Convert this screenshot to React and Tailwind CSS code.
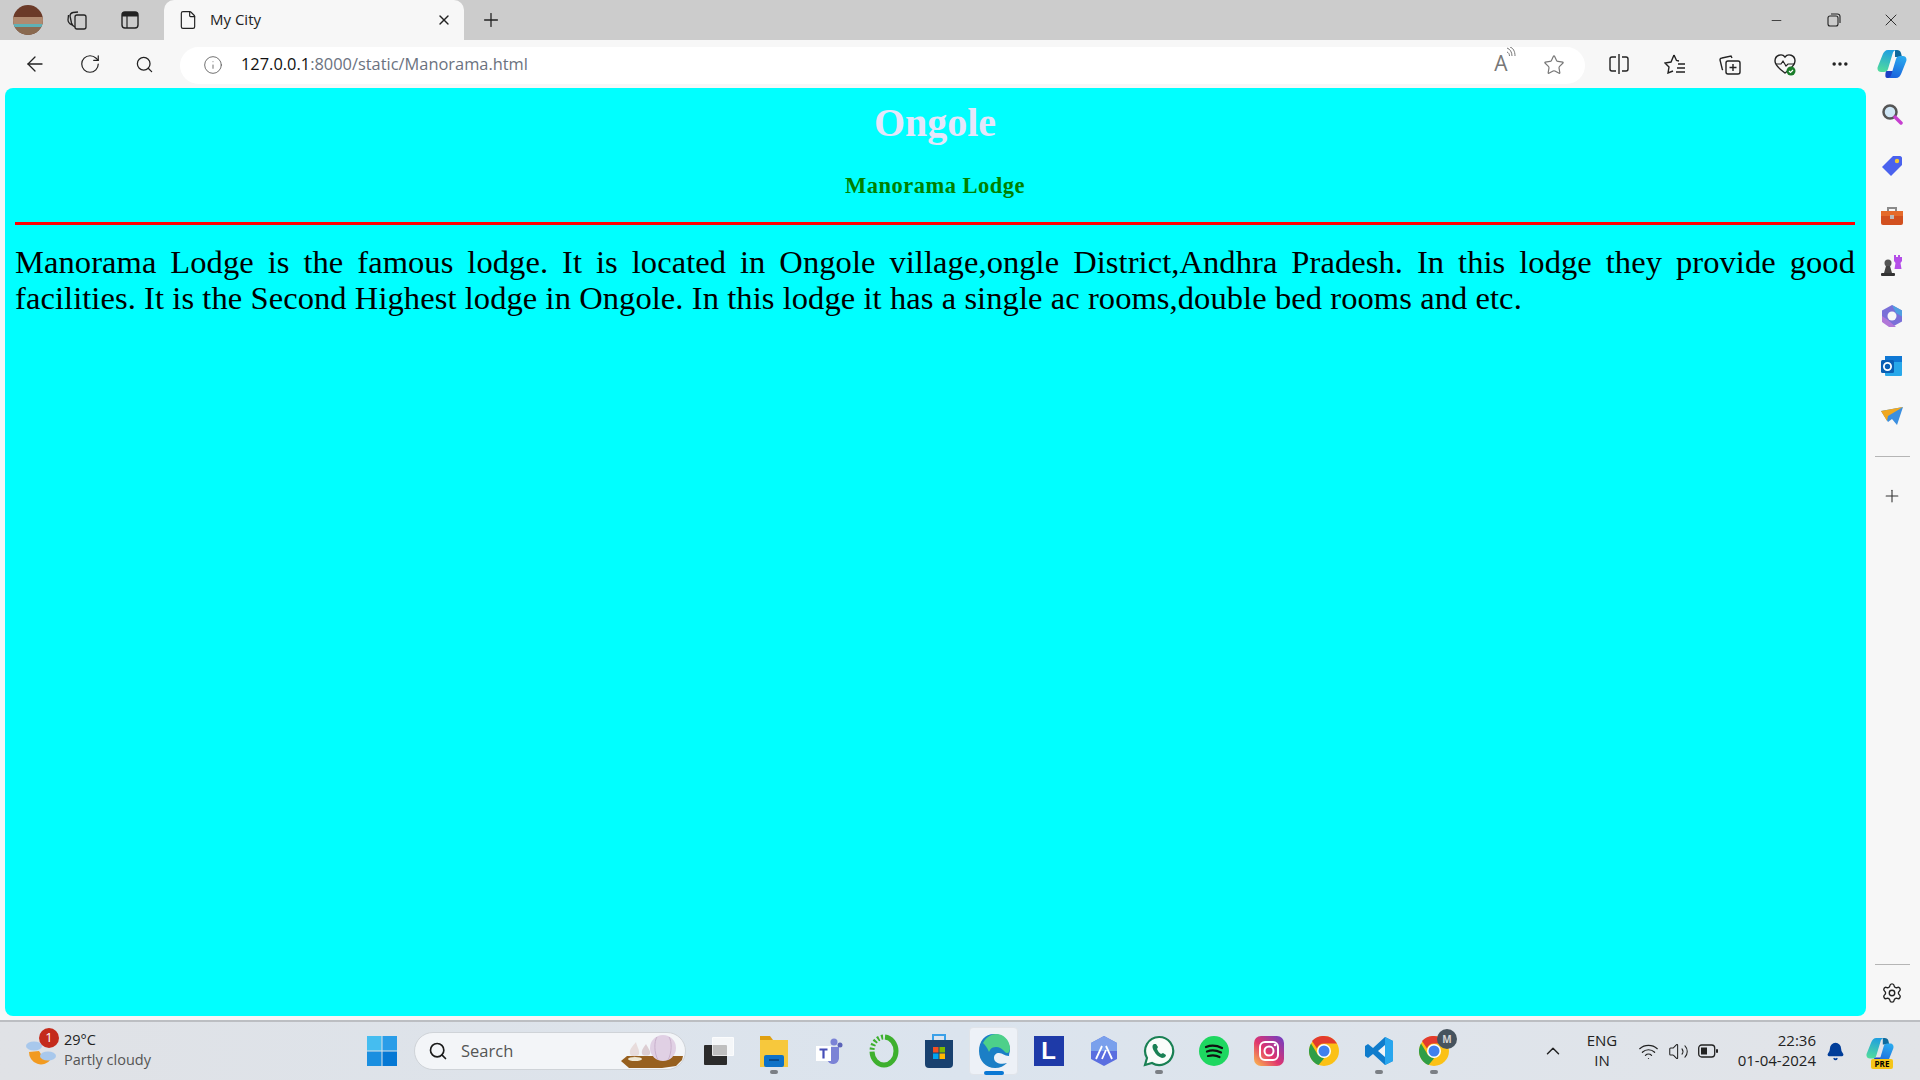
import React from "react";
import { ArrowLeft, RotateCw, Search, Info, Star, Plus, X, Minus, Settings, Wifi, Volume2, ChevronUp, Bell, File, Ellipsis } from "lucide-react";

const Slot = ({ w = "w-[55px]", children, className = "" }) => (
  <div className={`${w} h-full flex items-center justify-center shrink-0 relative ${className}`}>{children}</div>
);

const Copilot = ({ s = 30, id = "a" }) => (
  <svg width={s} height={s} viewBox="0 0 30 30">
    <defs>
      <linearGradient id={`cp1${id}`} x1="0.5" y1="0" x2="0.3" y2="1"><stop offset="0" stopColor="#1f9fe0" /><stop offset="1" stopColor="#52dc9c" /></linearGradient>
      <linearGradient id={`cp2${id}`} x1="0.6" y1="0" x2="0.3" y2="1"><stop offset="0" stopColor="#2aa8ee" /><stop offset="1" stopColor="#1a62dc" /></linearGradient>
    </defs>
    <path d="M18 1h2c2 0 3.500 1 4 3l1 4h-7z" fill="#0f6a9c" />
    <path d="M9 22h8l-3 6c-1 1-2 1-4 1-2 0-2-3-1-7z" fill="#1c3fc4" />
    <path d="M11 1H20C17 1 16 3 15.500 5L11 20C10.500 22 9 23 7 23H4C1 23 0 20 .7 18L5.500 6C6.500 3 8.500 1 11 1z" fill={`url(#cp1${id})`} />
    <path d="M19 29H10C13 29 14 27 14.500 25L19 10C19.500 8 21 7 23 7H26C29 7 30 10 29.300 12L24.500 24C23.500 27 21.500 29 19 29z" fill={`url(#cp2${id})`} />
  </svg>
);

const Side = ({ children, h = "h-[50px]" }) => <div className={`${h} flex items-center justify-center`}>{children}</div>;

const Sidebar = () => (
  <div className="w-[52px] flex flex-col items-center pt-[3px] h-full">
    <Side>
      <svg className="-mt-[4px]" width="22" height="22" viewBox="0 0 22 22"><circle cx="9" cy="9" r="6.500" fill="#cfe6f5" stroke="#555" strokeWidth="2.500" /><path d="M14 14l6 6" stroke="#c63fd0" strokeWidth="3.500" strokeLinecap="round" /></svg>
    </Side>
    <Side>
      <svg width="22" height="22" viewBox="0 0 22 22"><path d="M12 1h7c1 0 2 1 2 2v7L10 21 1 12z" fill="#4a62ee" /><circle cx="16" cy="6" r="2.200" fill="#f2c833" /></svg>
    </Side>
    <Side>
      <svg width="24" height="22" viewBox="0 0 24 22"><path d="M8 6V3h8v3" fill="none" stroke="#8a8a8a" strokeWidth="2" /><rect x="1" y="6" width="22" height="14" rx="2" fill="#d2501f" /><rect x="1" y="6" width="22" height="5" fill="#e56a2a" /><rect x="10" y="10" width="4" height="4" fill="#bbb" /></svg>
    </Side>
    <Side>
      <svg className="-mt-[2px]" width="24" height="24" viewBox="0 0 24 24"><circle cx="8" cy="10" r="3.500" fill="#555" /><path d="M6 13h4l2 7H4z" fill="#444" /><rect x="1" y="20" width="14" height="3" rx="1" fill="#333" /><path d="M14 2h2v2h2V2h2v2h2V1v7l-1.500 2 1 6h-7l1-6L14 8z" fill="#b44ee8" /></svg>
    </Side>
    <Side>
      <svg width="22" height="24" viewBox="0 0 22 24"><path d="M11 1l10 5.500v11L11 23 1 17.500v-11z" fill="#7a6fd8" /><path d="M11 1l10 5.500v6L15 9z" fill="#4f9fe0" /><path d="M1 12l6 4 8 7H8L1 18z" fill="#b077d8" /><circle cx="11" cy="12" r="4.500" fill="#f7f7f7" /></svg>
    </Side>
    <Side>
      <svg width="22" height="22" viewBox="0 0 22 22"><rect x="4" y="1" width="17" height="20" rx="1" fill="#28a8ea" /><rect x="4" y="1" width="17" height="6" fill="#0f78d4" /><rect x="0" y="5" width="13" height="13" rx="1.500" fill="#0a5fb4" /><circle cx="6.500" cy="11.500" r="3.600" fill="none" stroke="#fff" strokeWidth="1.800" /></svg>
    </Side>
    <Side>
      <svg width="23" height="18" viewBox="0 0 23 18"><path d="M0 4l22-4-6 18-5-6-4 3z" fill="#3b8fe0" /><path d="M0 4l22-4L7 9l-1 5z" fill="#f0a820" /></svg>
    </Side>
    <div className="w-[35px] h-[1px] bg-[#b5b5b5] mt-[15px]" />
    <Side h="h-[78px]"><Plus size={20} strokeWidth={1.3} color="#333" /></Side>
    <div className="flex-1" />
    <div className="w-[35px] h-[1px] bg-[#b5b5b5]" />
    <Side h="h-[55px]"><Settings size={22} strokeWidth={1.5} color="#222" /></Side>
  </div>
);

const TitleBar = () => (
  <div className="h-[40px] bg-[#cccccc] flex items-center shrink-0">
    <div className="w-[13px]" />
    <div className="w-[30px] h-[30px] -mr-[2px] rounded-full overflow-hidden bg-[#6b3a28] flex flex-col justify-end">
      <div className="h-[7px] bg-[#b08a70]" />
      <div className="h-[3px] bg-[#5fb1b5]" />
      <div className="h-[8px] bg-[#8a6a50]" />
    </div>
    <Slot w="w-[71px]">
      <svg width="22" height="22" viewBox="0 0 22 22" fill="none" stroke="#222" strokeWidth="1.300"><rect x="9" y="6" width="11" height="14" rx="2" /><path d="M9 18c-2-1-3-2-3.500-4L4 7c0-2 1-3 3-3.500l5-.5M6 16C4 15 2 13 2 11l.5-5" /></svg>
    </Slot>
    <Slot w="w-[36px]">
      <svg width="18" height="18" viewBox="0 0 18 18"><rect x="1" y="1" width="16" height="16" rx="3" fill="none" stroke="#222" strokeWidth="1.400" /><path d="M1 4a3 3 0 0 1 3-3h10a3 3 0 0 1 3 3v1.500H1z" fill="#222" /><path d="M6 5v12" stroke="#222" strokeWidth="1.200" /></svg>
    </Slot>
    <div className="w-[16px]" />
    <div className="w-[300px] h-full bg-[#f7f7f7] rounded-t-[10px] flex items-center pl-[14px] pr-[12px]">
      <File size={20} strokeWidth={1.4} color="#222" />
      <span className="ml-[12px] -mt-[2px] flex-1 text-[15px] text-[#222] font-['Open_Sans','Noto_Sans',sans-serif]">My City</span>
      <X size={16} strokeWidth={2} color="#222" />
    </div>
    <Slot w="w-[53px]"><Plus size={22} strokeWidth={1.4} color="#222" /></Slot>
    <div className="flex-1" />
    <Slot w="w-[57px]"><Minus size={15} strokeWidth={1.3} color="#222" /></Slot>
    <Slot w="w-[57px]">
      <svg width="14" height="14" viewBox="0 0 14 14" fill="none" stroke="#222" strokeWidth="1.100"><rect x="1" y="3" width="10" height="10" rx="2" /><path d="M4 1h6.500A2.500 2.500 0 0 1 13 3.500V10" /></svg>
    </Slot>
    <Slot w="w-[58px]"><X size={20} strokeWidth={1.1} color="#222" /></Slot>
  </div>
);

const ToolBar = () => (
  <div className="h-[48px] bg-[#f7f7f7] flex items-center shrink-0">
    <div className="w-[12px]" />
    <Slot w="w-[46px]"><ArrowLeft size={24} strokeWidth={1.3} color="#222" /></Slot>
    <Slot w="w-[64px]"><RotateCw size={22} strokeWidth={1.3} color="#222" /></Slot>
    <Slot w="w-[44px]"><Search size={19} strokeWidth={1.6} color="#222" /></Slot>
    <div className="w-[14px]" />
    <div className="w-[1405px] h-[37px] mt-[6px] mb-[4px] bg-white rounded-full flex items-center">
      <Slot w="w-[65px]"><Info size={20} strokeWidth={1} color="#555" /></Slot>
      <span className="-ml-[4px] -mt-[2px] flex-1 text-[16.400px] text-[#6b7280] font-['Open_Sans','Noto_Sans',sans-serif]">
        <span className="text-[#111]">127.0.0.1</span>:8000/static/Manorama.html
      </span>
      <Slot w="w-[50px]" className="mr-[6px]">
        <span className="ml-[6px] -mt-[2px] text-[21px] text-[#777] font-['Open_Sans',sans-serif] relative">A
          <svg className="absolute -top-[1px] left-[12px]" width="10" height="12" viewBox="0 0 10 12" fill="none" stroke="#777" strokeWidth="1"><path d="M1 1c3 1 5 4 5 8M1 5c1.500.5 2.500 2 2.500 4M4 0c3 1 5 4 5 9" /></svg>
        </span>
      </Slot>
      <Slot w="w-[50px]" className="mr-[6px]"><Star size={22} strokeWidth={1.3} color="#777" /></Slot>
    </div>
    <Slot w="w-[68px]">
      <svg width="22" height="20" viewBox="0 0 22 20" fill="none" stroke="#222" strokeWidth="1.400"><path d="M8 3H4a2 2 0 0 0-2 2v10a2 2 0 0 0 2 2h4M14 3h4a2 2 0 0 1 2 2v10a2 2 0 0 1-2 2h-4M11 0v20" /></svg>
    </Slot>
    <Slot w="w-[43px]">
      <svg width="22" height="20" viewBox="0 0 22 20" fill="none" stroke="#222" strokeWidth="1.400"><path d="M10 1l2.500 5.500L15 7M9 17l-5 2 1-6-4-4 6-1 3-7M14 10h7M13 14h8M12 18h9" /></svg>
    </Slot>
    <Slot w="w-[67px]">
      <svg width="22" height="22" viewBox="0 0 22 22" fill="none" stroke="#222" strokeWidth="1.400"><rect x="7" y="8" width="14" height="13" rx="2" /><path d="M14 11v7M10.500 14.500h7M13 5l-1-2-9 2a2 2 0 0 0-2 2l2 8a2 2 0 0 0 1 2" /></svg>
    </Slot>
    <Slot w="w-[43px]">
      <svg width="24" height="24" viewBox="0 0 24 24"><path d="M12 5c-3-4-10-2-10 4 0 5 6 9 10 12 4-3 10-7 10-12 0-6-7-8-10-4z" fill="none" stroke="#222" strokeWidth="1.400" /><path d="M3 12h5l2-3 3 5 2-2h6" fill="none" stroke="#222" strokeWidth="1.200" /><circle cx="18" cy="19" r="4.500" fill="#1a7d2a" /><path d="M16 19l1.500 1.500L20 18" fill="none" stroke="#fff" strokeWidth="1.200" /></svg>
    </Slot>
    <Slot w="w-[67px]"><Ellipsis size={20} strokeWidth={2.2} color="#222" /></Slot>
    <Slot w="w-[38px]"><Copilot /></Slot>
  </div>
);

const Content = () => (
  <div className="h-[928px] w-[1861px] ml-[5px] bg-[#00ffff] rounded-[8px] overflow-hidden pl-[10px] pr-[11px] font-['Liberation_Serif','Times_New_Roman',serif] shrink-0">
    <h1 className="mt-[12px] text-center text-[40px] leading-[46px] font-bold text-[#e6e6fa]">Ongole</h1>
    <h3 className="mt-[27px] text-center text-[22.500px] leading-[26px] font-bold text-[#008000] tracking-[0.5px]">Manorama Lodge</h3>
    <div className="mt-[23px] h-[3px] bg-[#ff0000]" />
    <p className="mt-[20px] text-[32.500px] leading-[35.500px] text-black text-justify tracking-[0.08px]">
      Manorama Lodge is the famous lodge. It is located in Ongole village,ongle District,Andhra Pradesh. In this lodge they provide good facilities. It is the Second Highest lodge in Ongole. In this lodge it has a single ac rooms,double bed rooms and etc.
    </p>
  </div>
);

const chrome = (k) => (
  <svg key={k} width="30" height="30" viewBox="0 0 30 30"><circle cx="15" cy="15" r="15" fill="#fbc116" /><path d="M15 0a15 15 0 0 1 13 7.500H15a7.500 7.500 0 0 0-7 5L3 5A15 15 0 0 1 15 0z" fill="#e33b2e" /><path d="M2 7.500L9 19l6 3.500L9.500 29A15 15 0 0 1 2 7.500z" fill="#2f9e46" /><circle cx="15" cy="15" r="7" fill="#fff" /><circle cx="15" cy="15" r="5.500" fill="#3f80ee" /></svg>
);

const TaskIcons = [
  <div key="a" className="w-[30px] h-[28px] relative">
    <div className="absolute left-0 bottom-0 w-[23px] h-[20px] rounded-[1px] bg-[#2b2b2b]" />
    <div className="absolute right-0 top-0 w-[22px] h-[19px] rounded-[1px] bg-white/70 border border-white/60" />
  </div>,
  <svg key="b" width="30" height="32" viewBox="0 0 30 32"><path d="M1 5h28v27H1z" fill="#f7c83c" /><path d="M1 1h10l3 4H1z" fill="#e0a010" /><rect x="5" y="20" width="20" height="12" rx="2" fill="#0e72c8" /><path d="M10 25h10" stroke="#063f7a" strokeWidth="1.500" /></svg>,
  <svg key="c" width="28" height="28" viewBox="0 0 28 28"><circle cx="19" cy="5" r="3.500" fill="#7b83d6" /><circle cx="25" cy="8" r="2.500" fill="#5b63b8" /><path d="M12 10h12v10a5 5 0 0 1-12 2z" fill="#7b83d6" /><rect x="1" y="9" width="15" height="15" fill="#fff" /><path d="M4.500 12.500h8M8.500 12.500v9" stroke="#464eb8" strokeWidth="2.200" /></svg>,
  <svg key="d" width="30" height="34" viewBox="0 0 30 34" fill="none"><ellipse cx="15" cy="17" rx="12" ry="14" stroke="#3eb02e" strokeWidth="5" strokeDasharray="40 2 2 2 2 2 2 2 2 2 2 2" /></svg>,
  <svg key="e" width="30" height="36" viewBox="0 0 30 36"><path d="M9 7V2h12v5" fill="none" stroke="#3aa0e8" strokeWidth="2" /><path d="M1 7h28v24a4 4 0 0 1-4 4H5a4 4 0 0 1-4-4z" fill="#19416f" /><rect x="9" y="14" width="5.500" height="5.500" fill="#f25022" /><rect x="15.500" y="14" width="5.500" height="5.500" fill="#7fba00" /><rect x="9" y="20.500" width="5.500" height="5.500" fill="#00a4ef" /><rect x="15.500" y="20.500" width="5.500" height="5.500" fill="#ffb900" /></svg>,
  <svg key="f" width="32" height="36" viewBox="0 0 32 36"><path d="M16 1C7 1 1 8 1 18c0 10 7 17 16 17 5 0 9-2 12-5-6 2-13 0-13-5 0-3 2-5 5-5 4 0 5 3 10 3 0-3 1-4 1-6C32 8 25 1 16 1z" fill="#1b7fc6" /><path d="M5 10C8 4 14 1 18 1c8 0 13 6 14 13 0 4-1 6-3 6-3 0-4-6-11-6-5 0-6 3-7 5C9 14 7 12 5 10z" fill="#4dd08a" /></svg>,
  <div key="g" className="w-[30px] h-[30px] bg-[#1e3aa8] flex items-center justify-center text-white text-[24px] font-bold font-['Liberation_Sans',sans-serif]">L</div>,
  <svg key="h" width="28" height="32" viewBox="0 0 28 32"><path d="M14 1l13 7v16l-13 7-13-7V8z" fill="#5a6ee0" /><path d="M14 1l13 7v8H1V8z" fill="#7aa0ec" /><path d="M6 24l6-13M12 24l4-9M22 24l-6-13" stroke="#fff" strokeWidth="1.800" fill="none" /></svg>,
  <svg key="i" width="32" height="32" viewBox="0 0 32 32"><path d="M16 2a14 14 0 0 0-12 21L2 30l7-2a14 14 0 1 0 7-26z" fill="#fafcfa" stroke="#1a8054" strokeWidth="2.200" /><path d="M11 9c-2 1-2 4 0 7 2 4 5 6 8 7 2 0 4-1 4-3l-3-2-2 1c-2-1-3-3-4-5l1-2-2-3z" fill="#1a8054" /></svg>,
  <svg key="j" width="30" height="30" viewBox="0 0 30 30" fill="none"><circle cx="15" cy="15" r="15" fill="#1ed760" /><path d="M7 11c5-2 11-1.500 16 1M8 15.500c4-1.500 10-1 14 1M9 20c4-1 8-1 11.500 1" stroke="#111" strokeWidth="2.200" strokeLinecap="round" /></svg>,
  <svg key="k" width="30" height="30" viewBox="0 0 30 30"><defs><linearGradient id="ig" x1="0" y1="1" x2="1" y2="0"><stop offset="0" stopColor="#fdc04a" /><stop offset=".45" stopColor="#e0346e" /><stop offset="1" stopColor="#6a3ec8" /></linearGradient></defs><rect width="30" height="30" rx="7" fill="url(#ig)" /><rect x="6" y="6" width="18" height="18" rx="5" fill="none" stroke="#fff" strokeWidth="2" /><circle cx="15" cy="15" r="4.500" fill="none" stroke="#fff" strokeWidth="2" /><circle cx="21" cy="9" r="1.300" fill="#fff" /></svg>,
  chrome("l"),
  <svg key="m" width="30" height="30" viewBox="0 0 30 30"><path d="M21 1l8 4v20l-8 4-12-11-5 4-3-2v-10l3-2 5 4z" fill="#0f7ccc" /><path d="M21 1l8 4v20l-8 4z" fill="#28a6ee" /><path d="M21 9l-7 6 7 6z" fill="#f0f4f8" /></svg>,
  chrome("n"),
];

const Taskbar = () => (
  <div className="h-[60px] border-t-2 border-[#bcbec2] bg-gradient-to-r from-[#e0e2e6] via-[#dbe4ee] to-[#e2e4e8] flex items-center shrink-0 font-['Open_Sans','Noto_Sans',sans-serif]">
    <div className="w-[23px]" />
    <div className="w-[41px] h-full relative">
      <svg className="absolute left-[2px] top-[16px]" width="32" height="30" viewBox="0 0 32 30"><path d="M4 14a12 12 0 0 0 22 7 14 14 0 0 1-12-8z" fill="#f29a20" /><ellipse cx="9" cy="8" rx="8" ry="4.500" fill="#a8c8ec" /><ellipse cx="23" cy="18" rx="8" ry="4.500" fill="#a8c8ec" /></svg>
      <div className="absolute left-[16px] top-[6px] w-[20px] h-[20px] rounded-full bg-[#c42b1c] text-white text-[13px] flex items-center justify-center">1</div>
    </div>
    <div className="w-[303px] flex flex-col justify-center -mt-[2px]">
      <span className="text-[14.500px] leading-[20px] text-[#222]">29°C</span>
      <span className="text-[14.500px] leading-[20px] text-[#555]">Partly cloudy</span>
    </div>
    <svg width="30" height="30" viewBox="0 0 30 30" className="shrink-0">
      <rect width="14.500" height="14.500" fill="#45bdf0" /><rect x="15.500" width="14.500" height="14.500" fill="#2a9de8" /><rect y="15.500" width="14.500" height="14.500" fill="#1a8fe0" /><rect x="15.500" y="15.500" width="14.500" height="14.500" fill="#0578d4" />
    </svg>
    <div className="w-[17px]" />
    <div className="w-[272px] h-[38px] rounded-full bg-[#f3f5f8] border border-[#cfd3d8] flex items-center relative overflow-hidden shrink-0">
      <Search size={20} strokeWidth={2} color="#1a1a1a" className="ml-[13px]" />
      <span className="ml-[13px] text-[16.500px] text-[#555]">Search</span>
      <svg className="absolute right-0 top-[1px]" width="66" height="34" viewBox="0 0 66 34">
        <path d="M2 27l6-5h56l-1 4-6 6-14 2H10z" fill="#97601f" />
        <ellipse cx="44" cy="14" rx="13" ry="13" fill="#e0d0e4" />
        <path d="M38 3c-3 4-3 16 1 23M50 3c3 4 3 16-1 23" stroke="#c8b0cc" strokeWidth="1" fill="none" />
        <path d="M17 8c-3 4-7 7-6 12 1 3 8 3 9 0 1-4-2-7-3-12z" fill="#e8dcdc" />
        <path d="M27 10c-2 3-5 6-4 10 1 2 7 2 8 0 1-3-2-6-4-10z" fill="#dccdd2" />
        <ellipse cx="16" cy="25" rx="7" ry="2" fill="#efe7d4" />
      </svg>
    </div>
    <div className="w-[5px]" />
    {TaskIcons.map((icon, i) => (
      <Slot key={i}>
        {i === 5 && <div className="absolute left-[3px] right-[3px] top-[5px] bottom-[5px] rounded-[4px] bg-[#edf1f7] border border-[#e0e4ea]" />}
        <div className="relative flex -mt-[1px]">{icon}</div>
        {[1, 8, 12, 13].includes(i) && <div className="absolute bottom-[6px] left-[24px] w-[8px] h-[4px] rounded-full bg-[#7b7f85]" />}
        {i === 5 && <div className="absolute bottom-[5px] left-[18px] w-[20px] h-[4px] rounded-full bg-[#0a78d4]" />}
        {i === 13 && <div className="absolute top-[7px] right-[4px] w-[20px] h-[20px] rounded-full bg-[#46535e] text-[#d5d5d5] text-[10px] font-bold flex items-center justify-center">M</div>}
      </Slot>
    ))}
    <div className="w-[77px]" />
    <Slot w="w-[30px]"><ChevronUp size={22} strokeWidth={1.6} color="#222" /></Slot>
    <div className="w-[16px]" />
    <div className="w-[36px] flex flex-col items-center -mt-[2px] text-[15px] leading-[20px] text-[#222]"><span>ENG</span><span>IN</span></div>
    <div className="w-[13px]" />
    <Slot w="w-[30px]"><Wifi size={21} strokeWidth={1.4} color="#222" /></Slot>
    <Slot w="w-[30px]"><Volume2 size={21} strokeWidth={1.2} color="#222" /></Slot>
    <Slot w="w-[30px]">
      <svg width="20" height="14" viewBox="0 0 20 14"><rect x=".7" y="1" width="16" height="12" rx="3" fill="none" stroke="#222" strokeWidth="1.300" /><rect x="3" y="3.500" width="6" height="7" fill="#222" /><rect x="18" y="5" width="2" height="4" rx="1" fill="#222" /></svg>
    </Slot>
    <div className="w-[8px]" />
    <div className="w-[85px] flex flex-col items-end -mt-[2px] text-[15px] leading-[20px] text-[#222] whitespace-nowrap"><span>22:36</span><span>01-04-2024</span></div>
    <Slot w="w-[38px]"><Bell size={19} fill="#003d99" color="#003d99" /></Slot>
    <Slot w="w-[52px]">
      <div className="relative">
        <Copilot s={28} id="b" />
        <div className="absolute -bottom-[4px] left-[5px] w-[22px] h-[10px] rounded-[2px] bg-[#f5c518] text-[8px] leading-[10px] font-bold text-black text-center">PRE</div>
      </div>
    </Slot>
  </div>
);

export default function App() {
  return (
    <div className="w-[1920px] h-[1080px] overflow-hidden flex flex-col bg-[#f7f7f7]">
      <TitleBar />
      <ToolBar />
      <div className="h-[932px] flex shrink-0">
        <div className="w-[1866px] shrink-0"><Content /></div>
        <Sidebar />
      </div>
      <Taskbar />
    </div>
  );
}
